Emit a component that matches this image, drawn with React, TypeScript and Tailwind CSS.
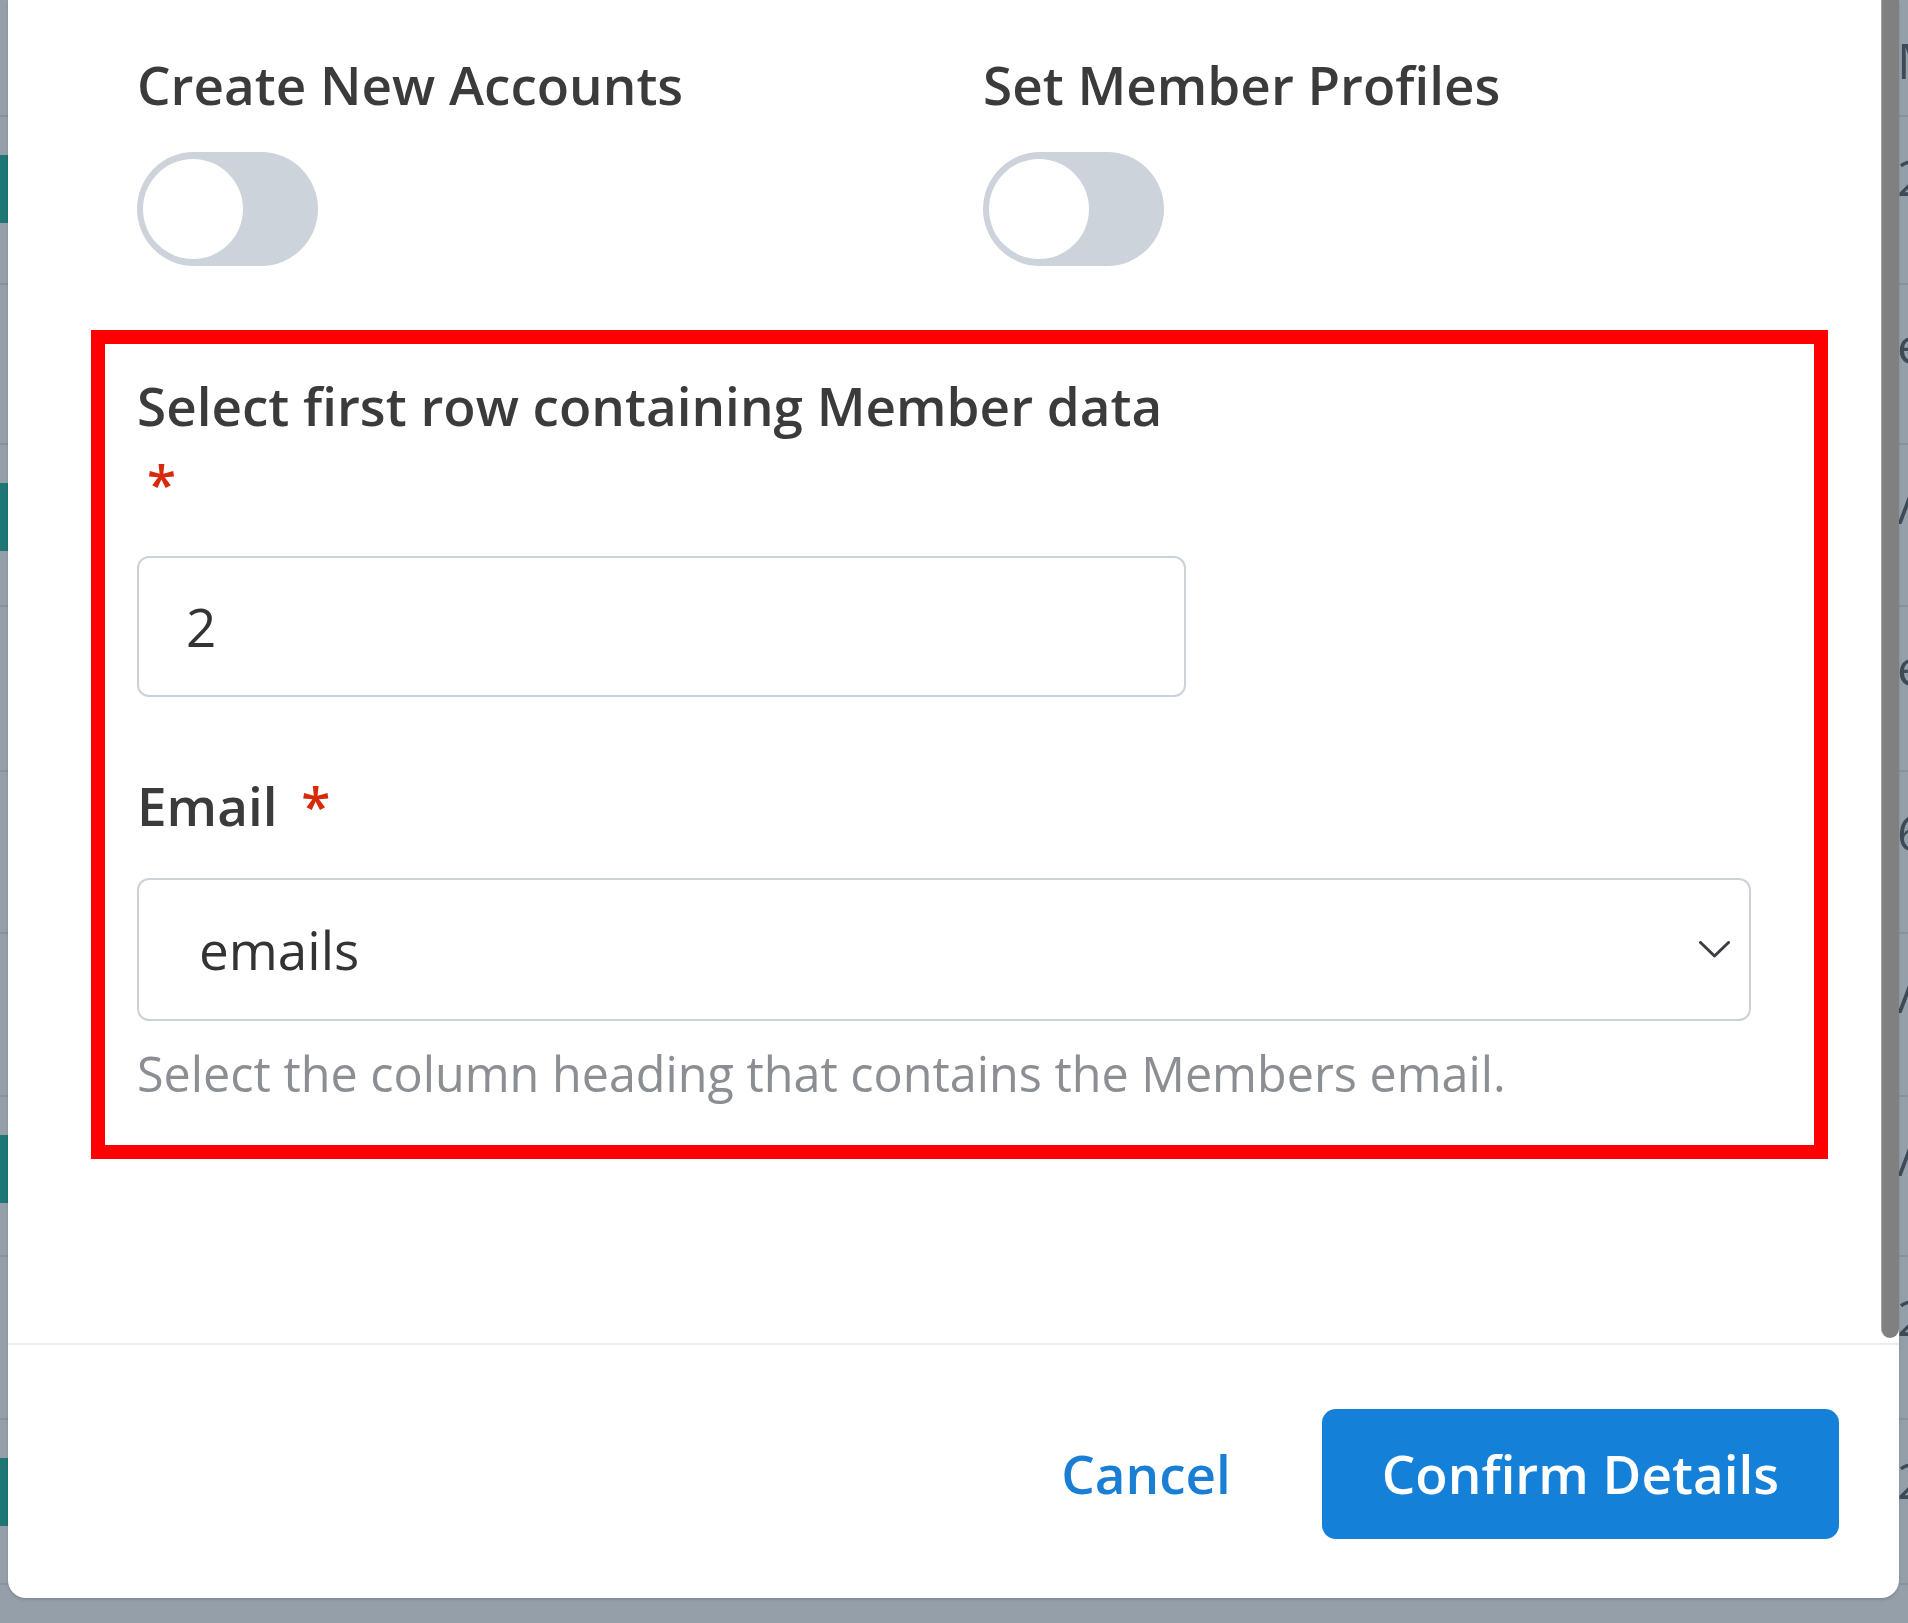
import React from "react";

type Row = { cls: string; teal: boolean; ch: string };

const rows: Row[] = [
  { cls: "h-[115px]", teal: false, ch: "M" },
  { cls: "h-[168px] border-t-2 border-[#87929d]", teal: true, ch: "2" },
  { cls: "h-[160px] border-t-2 border-[#87929d]", teal: false, ch: "e" },
  { cls: "h-[162px] border-t-2 border-[#87929d]", teal: true, ch: "/" },
  { cls: "h-[165px] border-t-2 border-[#87929d]", teal: false, ch: "e" },
  { cls: "h-[162px] border-t-2 border-[#87929d]", teal: false, ch: "6" },
  { cls: "h-[163px] border-t-2 border-[#87929d]", teal: false, ch: "/" },
  { cls: "h-[160px] border-t-2 border-[#87929d]", teal: true, ch: "/" },
  { cls: "h-[163px] border-t-2 border-[#87929d]", teal: false, ch: "2" },
  { cls: "h-[165px] border-t-2 border-[#87929d]", teal: true, ch: "2" },
  { cls: "h-[40px] border-t-2 border-[#87929d]", teal: true, ch: "" },
];

function Toggle() {
  return (
    <div className="mt-[28px] w-[181px] h-[114px] rounded-full bg-[#cdd3da] flex items-center pl-[6px]">
      <div className="w-[100px] h-[100px] rounded-full bg-white" />
    </div>
  );
}

export default function App() {
  return (
    <div className="relative w-[1908px] h-[1623px] overflow-hidden bg-[#959fa9] font-['Open_Sans',sans-serif]">
      {/* page behind the overlay */}
      <div className="flex flex-col">
        {rows.map((r, i) => (
          <div key={i} className={"relative shrink-0 " + r.cls}>
            {r.teal && <div className="absolute left-0 top-[38px] w-[50px] h-[68px] bg-[#1e7775]" />}
            {r.ch && (
              <span className="absolute left-[1897px] top-[30px] text-[50px] leading-[60px] text-[#3d4a57]">
                {r.ch}
              </span>
            )}
          </div>
        ))}
      </div>

      {/* modal */}
      <div className="absolute left-[8px] top-0 w-[1891px] h-[1598px] bg-white rounded-b-[18px] flex flex-col overflow-hidden shadow-[0_2px_3px_rgba(0,0,0,0.12)]">
        <div className="relative h-[1343px] shrink-0">
          <div className="absolute right-0 top-0 w-[18px] h-[1338px] bg-[#808080] rounded-b-[9px] border-l border-[#a5a5a5]" />
          <div className="pl-[129px] pt-[46px] w-[1743px]">
            <div className="flex">
              <div className="w-[846px]">
                <div className="text-[53px] leading-[78px] font-semibold text-[#3b3b3b]">Create New Accounts</div>
                <Toggle />
              </div>
              <div>
                <div className="text-[53px] leading-[78px] font-semibold text-[#3b3b3b]">Set Member Profiles</div>
                <Toggle />
              </div>
            </div>

            <div className="mt-[64px] -ml-[46px] -mr-[77px] border-[14px] border-[#ff0000] pt-[23px] pl-[32px] pr-[63px] pb-[36px]">
              <div className="text-[53px] leading-[78px] font-semibold text-[#3b3b3b]">
                <div>Select first row containing Member data</div>
                <div>
                  <span className="ml-[10px] text-[#d9290b]">*</span>
                </div>
              </div>
              <div className="mt-[33px] w-[1049px] h-[141px] border-2 border-[#cbd2da] rounded-[12px] flex items-center pl-[47px] text-[53px] text-[#333333]">
                2
              </div>

              <div className="mt-[70px] text-[53px] leading-[78px] font-semibold text-[#3b3b3b]">
                Email <span className="ml-[10px] text-[#d9290b]">*</span>
              </div>
              <div className="mt-[33px] w-full h-[143px] border-2 border-[#cbd2da] rounded-[12px] flex items-center justify-between pl-[60px] pr-[19px] text-[53px] text-[#333333]">
                <span>emails</span>
                <svg width="31" height="17" viewBox="0 0 31 17" fill="none">
                  <path d="M1.5 1.5 L15.5 15 L29.5 1.5" stroke="#3a3f45" strokeWidth="3" strokeLinecap="round" strokeLinejoin="round" />
                </svg>
              </div>
              <div className="mt-[16px] text-[48.5px] leading-[72px] text-[#8b8e92]">
                Select the column heading that contains the Members email.
              </div>
            </div>
          </div>
        </div>
        <div className="h-[2px] shrink-0 bg-[#ececec]" />
        <div className="flex-1 flex items-center justify-end pr-[60px] pt-[4px]">
          <button className="mr-[91px] text-[53px] leading-[78px] font-semibold text-[#1a7fd4]">Cancel</button>
          <button className="h-[130px] px-[60px] rounded-[14px] bg-[#1580d8] text-white text-[53px] font-semibold">
            Confirm Details
          </button>
        </div>
      </div>
    </div>
  );
}
